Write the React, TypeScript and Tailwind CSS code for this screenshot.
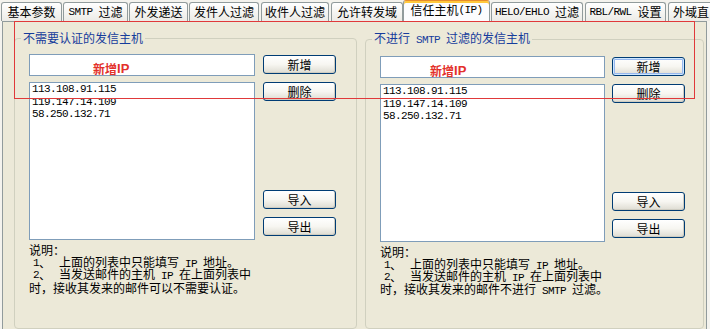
import React from "react";

const M = ({ children }: { children: React.ReactNode }) => (
  <span className="font-['Liberation_Mono',monospace] text-[11px] tracking-[-0.6px]">{children}</span>
);

const tabBase =
  "h-[19px] shrink-0 border border-b-0 border-[#919b9c] rounded-t-[3px] bg-linear-to-b from-white to-[#ecebe6] flex items-center text-[12px] leading-[12px] text-black whitespace-pre";

function Tabs() {
  return (
    <div className="h-[21px] flex items-end pl-[1px]">
      <div className={`${tabBase} w-[61px] mr-[1px] justify-center`}>基本参数</div>
      <div className={`${tabBase} w-[65px] mr-[1px] justify-center`}>
        <M>SMTP </M>过滤
      </div>
      <div className={`${tabBase} w-[59px] mr-[1px] justify-center`}>外发递送</div>
      <div className={`${tabBase} w-[70px] mr-[2px] justify-center`}>发件人过滤</div>
      <div className={`${tabBase} w-[68px] mr-[2px] justify-center`}>收件人过滤</div>
      <div className={`${tabBase} w-[72px] justify-center`}>允许转发域</div>
      <div className="h-[22px] -mb-px relative z-10 w-[87px] mr-[1px] shrink-0 border border-b-0 border-[#919b9c] border-t-[#e68b2c] rounded-t-[3px] bg-[#fcfcfe] shadow-[inset_0_2px_0_#ffc83c] flex justify-center pt-[3px] text-[12px] leading-[12px] text-black whitespace-pre">
        信任主机<M>(IP)</M>
      </div>
      <div className={`${tabBase} w-[92px] mr-[2px] justify-center`}>
        <M>HELO/EHLO </M>过滤
      </div>
      <div className={`${tabBase} w-[81px] mr-[2px] justify-center`}>
        <M>RBL/RWL </M>设置
      </div>
      <div className={`${tabBase} w-[60px] pl-[4px]`}>外域直</div>
    </div>
  );
}

function Btn({ label, focus, cls }: { label: string; focus?: boolean; cls: string }) {
  return (
    <div
      className={`${cls} w-[73px] h-[19px] border border-[#003c74] rounded-[3px] bg-linear-to-b from-white via-[#f7f6f1] to-[#dedcd2] flex items-center justify-center text-[12px] leading-[12px] text-black ${
        focus
          ? "shadow-[inset_0_0_0_1px_#cee7ff,inset_0_0_0_2px_#97b8ee]"
          : "shadow-[inset_-1px_-1px_0_#cfcdc2]"
      }`}
    >
      {label}
    </div>
  );
}

const lineCls = "h-[12.5px] leading-[12.5px] flex items-center whitespace-pre";
const preCls = "w-[30px] shrink-0 pl-[4px] flex";

function Group({
  title,
  w,
  inputW,
  redPad,
  gap,
  focus,
  last,
}: {
  title: React.ReactNode;
  w: string;
  inputW: string;
  redPad: string;
  gap: string;
  focus?: boolean;
  last: React.ReactNode;
}) {
  return (
    <fieldset className={`${w} shrink-0 border border-[#d0d0bf] rounded-[4px]`}>
      <legend className="ml-[6px] px-[2px] text-[12px] leading-[14px] text-[#163c9c] whitespace-pre">{title}</legend>
      <div className="h-[278px] pl-[14px] pt-[9px] flex">
        <div className={`${inputW} shrink-0 flex flex-col`}>
          <div className={`h-[22px] border border-[#7f9db9] bg-white flex items-center pt-[7px] ${redPad}`}>
            <span className="text-[12px] leading-[12px] font-bold text-[#e3302a]">新增</span>
            <span className="font-['Liberation_Sans',Arial,sans-serif] text-[13px] leading-[12px] font-bold text-[#e3302a]">IP</span>
          </div>
          <div className="mt-[6px] h-[158px] border border-[#7f9db9] bg-white pl-[2px] font-['Liberation_Mono',monospace] text-[11px] tracking-[-0.6px] leading-[12.5px] text-black">
            <div>113.108.91.115</div>
            <div>119.147.14.109</div>
            <div>58.250.132.71</div>
          </div>
          <div className="mt-[4px] text-[12px] text-black">
            <div className={lineCls}>说明：</div>
            <div className={lineCls}>
              <span className={preCls}>
                <M>1</M>、
              </span>
              <span className="shrink-0">
                上面的列表中只能填写<M> IP </M>地址。
              </span>
            </div>
            <div className={lineCls}>
              <span className={preCls}>
                <M>2</M>、
              </span>
              <span className="shrink-0">
                当发送邮件的主机<M> IP </M>在上面列表中
              </span>
            </div>
            <div className={lineCls}>{last}</div>
          </div>
        </div>
        <div className={`${gap} flex flex-col`}>
          <Btn cls="mt-[1px]" label="新增" focus={focus} />
          <Btn cls="mt-[8px]" label="删除" />
          <Btn cls="mt-[89px]" label="导入" />
          <Btn cls="mt-[8px]" label="导出" />
        </div>
      </div>
    </fieldset>
  );
}

export default function App() {
  return (
    <div className="relative w-[710px] h-[329px] overflow-hidden bg-[#f4f3ee] font-['Noto_Sans_CJK_SC','Noto_Sans',sans-serif]">
      <Tabs />
      <div className="ml-[2px] w-[705px] h-[308px] border-x border-t border-[#919b9c] bg-[#ece9d8] pt-[9px] pl-[11px] flex gap-[8px]">
        <Group
          title="不需要认证的发信主机"
          w="w-[343px]"
          inputW="w-[226px]"
          redPad="pl-[63px]"
          gap="ml-[8px]"
          last={<span className="shrink-0">时，接收其发来的邮件可以不需要认证。</span>}
        />
        <Group
          title={
            <>
              不进行<M> SMTP </M>过滤的发信主机
            </>
          }
          w="w-[339px]"
          inputW="w-[225px]"
          redPad="pl-[49px]"
          gap="ml-[7px]"
          focus
          last={
            <span className="shrink-0">
              时，接收其发来的邮件不进行<M> SMTP </M>过滤。
            </span>
          }
        />
      </div>
      <div className="absolute left-[14px] top-[21px] w-[681px] h-[78px] border border-[#e0393a] pointer-events-none z-20" />
    </div>
  );
}
